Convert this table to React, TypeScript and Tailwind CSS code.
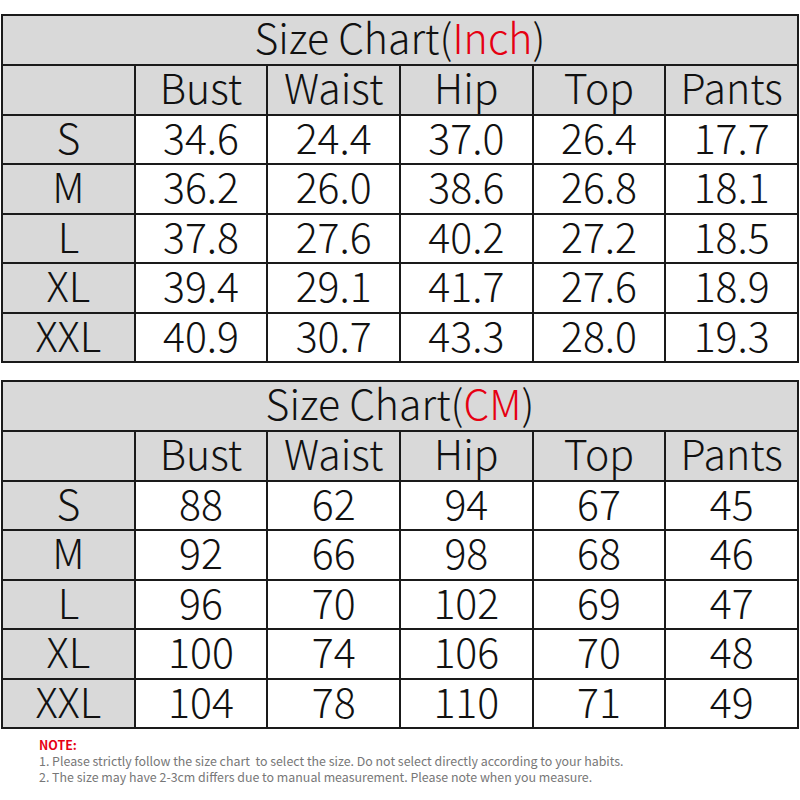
import React from 'react';

const headers = ['Bust', 'Waist', 'Hip', 'Top', 'Pants'];
const sizes = ['S', 'M', 'L', 'XL', 'XXL'];

const inchData = [
  ['34.6', '24.4', '37.0', '26.4', '17.7'],
  ['36.2', '26.0', '38.6', '26.8', '18.1'],
  ['37.8', '27.6', '40.2', '27.2', '18.5'],
  ['39.4', '29.1', '41.7', '27.6', '18.9'],
  ['40.9', '30.7', '43.3', '28.0', '19.3'],
];

const cmData = [
  ['88', '62', '94', '67', '45'],
  ['92', '66', '98', '68', '46'],
  ['96', '70', '102', '69', '47'],
  ['100', '74', '106', '70', '48'],
  ['104', '78', '110', '71', '49'],
];

// Tableau des tailles
const SizeTable: React.FC<{ unit: string; rows: string[][] }> = ({ unit, rows }) => (
  <div className="ml-[1px] w-[798px] bg-[#1a1a1a] p-[2px] grid grid-cols-6 gap-[2px] text-[41px] font-light text-[#111] leading-none font-['Noto_Sans_CJK_SC_Light','Noto_Sans_CJK_SC',sans-serif]">
    <div className="col-span-6 h-[48px] pb-[7px] bg-[#d9d9d9] flex items-center justify-center">
      <span>
        Size Chart(<span className="text-[#e60012]">{unit}</span>)
      </span>
    </div>
    <div className="h-[47.5px] bg-[#d9d9d9]" />
    {headers.map((h) => (
      <div key={h} className="h-[47.5px] pb-[6px] bg-[#d9d9d9] flex items-center justify-center">
        {h}
      </div>
    ))}
    {rows.map((row, i) => (
      <React.Fragment key={sizes[i]}>
        <div className="h-[47.5px] pb-[6px] bg-[#d9d9d9] flex items-center justify-center">{sizes[i]}</div>
        {row.map((v, j) => (
          <div key={j} className="h-[47.5px] pb-[6px] bg-white flex items-center justify-center">
            {v}
          </div>
        ))}
      </React.Fragment>
    ))}
  </div>
);

export default function App() {
  return (
    <div className="w-[800px] h-[800px] bg-white pt-[14px] overflow-hidden font-['Noto_Sans_CJK_SC','Noto_Sans',sans-serif]">
      <SizeTable unit="Inch" rows={inchData} />
      <div className="h-[17px]" />
      <SizeTable unit="CM" rows={cmData} />
      <div className="pl-[39px] pt-[8px] text-[12.4px] leading-[16px] text-[#777]">
        <div className="font-bold text-[#e60012]">NOTE:</div>
        <div>1. Please strictly follow the size chart&nbsp; to select the size. Do not select directly according to your habits.</div>
        <div>2. The size may have 2-3cm differs due to manual measurement. Please note when you measure.</div>
      </div>
    </div>
  );
}
